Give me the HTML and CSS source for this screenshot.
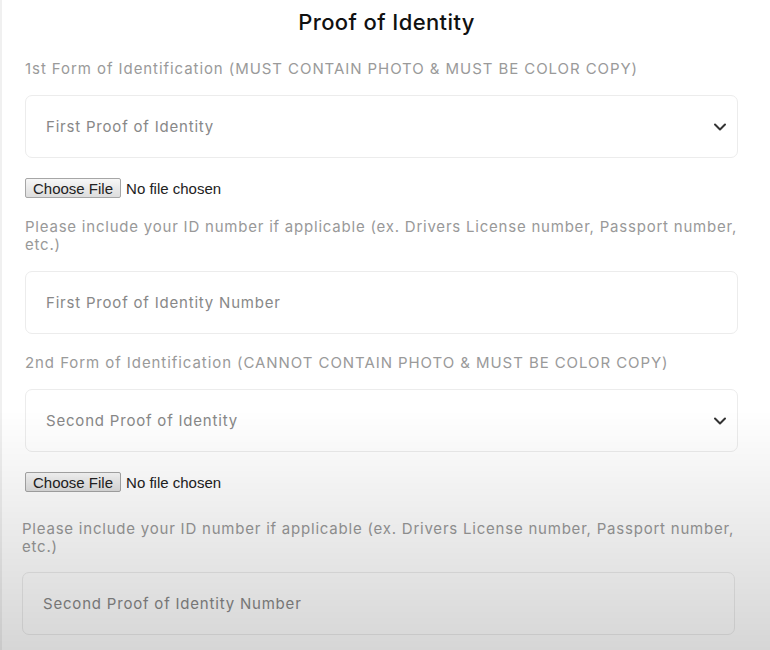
FILE: index.html
```html
<!DOCTYPE html>
<html lang="en">
<head>
    <meta charset="UTF-8">
    <meta name="viewport" content="width=device-width, initial-scale=1.0">
    <title>Proof of Identity</title>
    <link rel="stylesheet" href="styles.css">
</head>
<body>
    <div class="page">
        <h2 class="title">Proof of Identity</h2>

        <form class="id-form">
            <div class="id-group">
                <label class="field-label" for="first-id">1st Form of Identification (MUST CONTAIN PHOTO &amp; MUST BE COLOR COPY)</label>
                <div class="select-wrap">
                    <select class="field" id="first-id">
                        <option selected disabled>First Proof of Identity</option>
                        <option>Drivers License</option>
                        <option>Passport</option>
                    </select>
                    <svg class="chevron" viewBox="0 0 16 16" width="16" height="16"><path d="M3 5.5l5 5 5-5" fill="none" stroke="#333" stroke-width="2" stroke-linecap="round" stroke-linejoin="round"/></svg>
                </div>
                <input class="file-input" type="file">
                <p class="hint">Please include your ID number if applicable (ex. Drivers License number, Passport number, etc.)</p>
                <input class="field" type="text" placeholder="First Proof of Identity Number">
            </div>

            <div class="id-group">
                <label class="field-label" for="second-id">2nd Form of Identification (CANNOT CONTAIN PHOTO &amp; MUST BE COLOR COPY)</label>
                <div class="select-wrap">
                    <select class="field" id="second-id">
                        <option selected disabled>Second Proof of Identity</option>
                        <option>Birth Certificate</option>
                        <option>Social Security Card</option>
                    </select>
                    <svg class="chevron" viewBox="0 0 16 16" width="16" height="16"><path d="M3 5.5l5 5 5-5" fill="none" stroke="#333" stroke-width="2" stroke-linecap="round" stroke-linejoin="round"/></svg>
                </div>
                <input class="file-input" type="file">
                <p class="hint shifted">Please include your ID number if applicable (ex. Drivers License number, Passport number, etc.)</p>
                <input class="field shifted" type="text" placeholder="Second Proof of Identity Number">
            </div>
        </form>
    </div>
    <div class="shade"></div>
</body>
</html>
```

FILE: styles.css
```css
* {
    margin: 0;
    padding: 0;
    box-sizing: border-box;
}

body {
    background: #fff;
    font-family: 'Inter', 'Roboto', sans-serif;
    color: #999;
    min-height: 100vh;
    border-left: 2px solid #f0f0f0;
}

.page {
    width: 713px;
    margin-left: 23px;
    padding-top: 9px;
}

.title {
    font-family: 'Inter', 'Noto Sans', sans-serif;
    font-size: 22px;
    font-weight: 500;
    letter-spacing: 0.4px;
    color: #111;
    text-align: center;
    padding-left: 10px;
    margin-bottom: 24px;
}

.id-form {
    display: flex;
    flex-direction: column;
    gap: 19px;
}

.id-group {
    display: flex;
    flex-direction: column;
}

.field-label {
    font-size: 15px;
    letter-spacing: 0.93px;
    color: #9a9a9a;
    margin-bottom: 17px;
}

.select-wrap {
    position: relative;
}

.field {
    width: 100%;
    height: 63px;
    padding: 0 20px;
    border: 1px solid #ececec;
    border-radius: 7px;
    background: #fff;
    font-family: 'Inter', 'Roboto', sans-serif;
    font-size: 15px;
    letter-spacing: 0.8px;
    color: #888;
    appearance: none;
    outline: none;
}

.field::placeholder {
    color: #888;
}

.chevron {
    position: absolute;
    right: 10px;
    top: 24px;
    pointer-events: none;
}

.file-input {
    margin-top: 20px;
    font-family: 'Liberation Sans', sans-serif;
    font-size: 15px;
    color: #222;
}

.file-input::file-selector-button {
    font-family: 'Liberation Sans', sans-serif;
    font-size: 15px;
    color: #222;
    background: linear-gradient(#f7f7f7, #dddddd);
    border: 1px solid #a6a6a6;
    border-radius: 2px;
    padding: 1px 7px 0;
    margin-right: 5px;
}

.hint {
    font-size: 15px;
    letter-spacing: 0.78px;
    line-height: 18px;
    margin-top: 20px;
    margin-bottom: 17px;
}

.shifted {
    margin-left: -3px;
}

.hint.shifted {
    margin-top: 28px;
    margin-bottom: 16px;
}

.shade {
    position: fixed;
    left: 0;
    right: 0;
    bottom: 0;
    height: 240px;
    background: linear-gradient(rgba(0, 0, 0, 0), rgba(0, 0, 0, 0.16));
    pointer-events: none;
}
```
